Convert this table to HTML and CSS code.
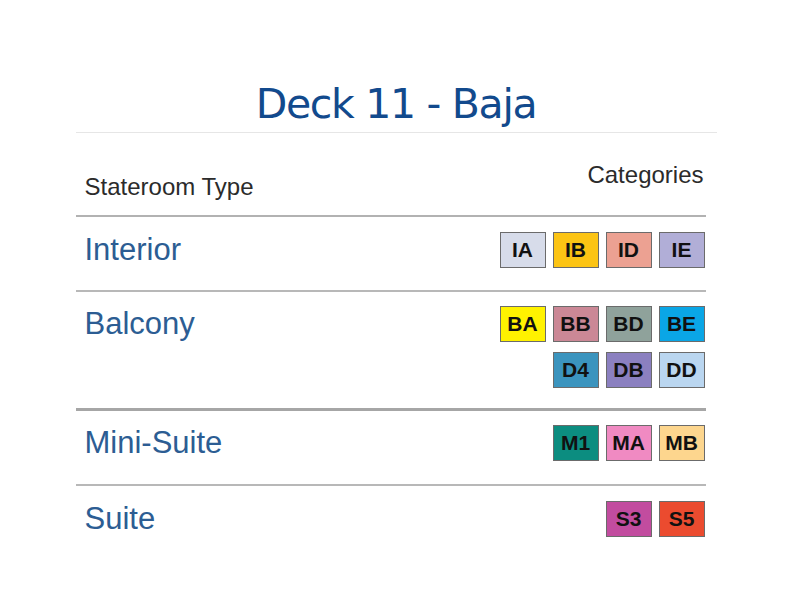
FILE: index.html
```html
<!DOCTYPE html>
<html>
<head>
<meta charset="utf-8">
<link rel="stylesheet" href="styles.css">
</head>
<body>
<div class="page">
  <h1 class="title">Deck 11 - Baja</h1>
  <div class="table">
    <div class="head">
      <div class="head-type">Stateroom Type</div>
      <div class="head-cat">Categories</div>
    </div>
    <div class="row">
      <div class="label">Interior</div>
      <div class="cats">
        <span class="badge c-ia">IA</span>
        <span class="badge c-ib">IB</span>
        <span class="badge c-id">ID</span>
        <span class="badge c-ie">IE</span>
      </div>
    </div>
    <div class="row row-tall row-thick">
      <div class="label">Balcony</div>
      <div class="cats">
        <span class="badge c-ba">BA</span>
        <span class="badge c-bb">BB</span>
        <span class="badge c-bd">BD</span>
        <span class="badge c-be">BE</span>
        <span class="badge c-d4">D4</span>
        <span class="badge c-db">DB</span>
        <span class="badge c-dd">DD</span>
      </div>
    </div>
    <div class="row row-mini">
      <div class="label">Mini-Suite</div>
      <div class="cats">
        <span class="badge c-m1">M1</span>
        <span class="badge c-ma">MA</span>
        <span class="badge c-mb">MB</span>
      </div>
    </div>
    <div class="row row-last">
      <div class="label">Suite</div>
      <div class="cats">
        <span class="badge c-s3">S3</span>
        <span class="badge c-s5">S5</span>
      </div>
    </div>
  </div>
</div>
</body>
</html>
```

FILE: styles.css
```css
* { box-sizing: border-box; }
html, body { margin: 0; padding: 0; background: #ffffff; }
body { font-family: "Liberation Sans", Arial, sans-serif; }

.page {
  width: 641px;
  margin: 0 auto;
}

.title {
  margin: 0;
  padding: 82px 0 6px;
  line-height: 44px;
  font-family: "DejaVu Sans", sans-serif;
  font-weight: normal;
  font-size: 41px;
  letter-spacing: -1.3px;
  color: #124a8d;
  text-align: center;
  border-bottom: 1px solid #e6e6e6;
}

.table {
  width: 630px;
}

.head {
  height: 84px;
  display: flex;
  justify-content: space-between;
  padding: 0 2px 0 9px;
  border-bottom: 2px solid #b2b2b2;
  color: #2b2b2b;
  font-size: 24px;
  line-height: 28px;
}
.head-type { align-self: flex-end; padding-bottom: 14px; }
.head-cat { align-self: flex-start; margin-top: 28px; }

.row {
  display: flex;
  justify-content: space-between;
  align-items: flex-start;
  padding: 15px 1px 0 9px;
  height: 75px;
  border-bottom: 2px solid #b8b8b8;
}
.row-tall { height: 119px; padding-top: 14px; }
.row-thick { border-bottom: 3px solid #a6a6a6; }
.row-mini { padding-top: 14px; }
.row-last { border-bottom: none; }

.label {
  font-size: 31px;
  line-height: 36px;
  color: #2c5d93;
}

.cats {
  width: 205px;
  display: flex;
  flex-wrap: wrap;
  justify-content: flex-end;
  gap: 10px 7px;
}

.badge {
  width: 46px;
  height: 36px;
  display: flex;
  align-items: center;
  justify-content: center;
  border: 1px solid #6b6b6b;
  font-weight: bold;
  font-size: 21px;
  color: #111;
}

.c-ia { background: #d7dcea; }
.c-ib { background: #fcc414; }
.c-id { background: #eca192; }
.c-ie { background: #b1aed7; }
.c-ba { background: #fff200; }
.c-bb { background: #cb8896; }
.c-bd { background: #8fa29b; }
.c-be { background: #0aa6e6; }
.c-d4 { background: #3b94be; }
.c-db { background: #8b80c0; }
.c-dd { background: #bad6f0; }
.c-m1 { background: #0c8d80; }
.c-ma { background: #f08ac2; }
.c-mb { background: #fdd68e; }
.c-s3 { background: #c24c9f; }
.c-s5 { background: #eb4b2f; }
```
